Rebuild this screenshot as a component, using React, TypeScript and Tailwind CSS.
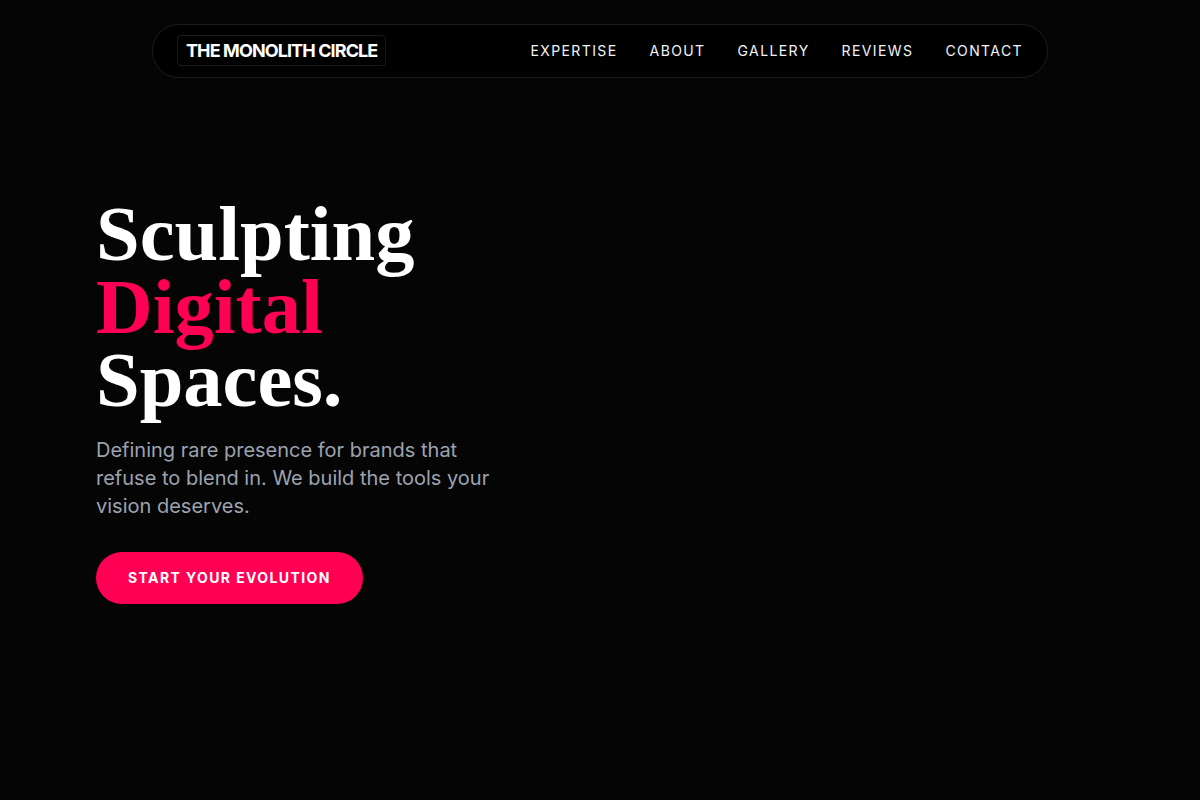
const navLinks = ['EXPERTISE', 'ABOUT', 'GALLERY', 'REVIEWS', 'CONTACT']

export default function App() {
  return (
    <div className="min-h-[800px] bg-[#050505] font-['Inter',sans-serif] text-white">
      <div className="flex justify-center pt-6">
        <nav className="flex h-[54px] w-[896px] items-center justify-between rounded-full border border-white/10 bg-black px-6">
          <div className="mb-px rounded border border-white/10 px-2 py-[3px] text-lg leading-[23px] font-bold tracking-[-0.9px]">THE MONOLITH CIRCLE</div>
          <div className="flex gap-8">
            {navLinks.map((link) => (
              <a key={link} className="text-sm leading-5 tracking-[1.4px] text-gray-100">{link}</a>
            ))}
          </div>
        </nav>
      </div>

      <main className="px-24 pt-[119px]">
        <h1 className="font-['Liberation_Serif',serif] text-[78.5px] leading-[73px] font-bold">
          Sculpting
          <br />
          <span className="text-[#ff0055]">Digital</span>
          <br />
          Spaces.
        </h1>
        <p className="mt-5 w-[420px] text-xl leading-7 text-[#9ca3af]">
          Defining rare presence for brands that refuse to blend in. We build the tools your vision deserves.
        </p>
        <button type="button" className="mt-8 h-[52px] rounded-full bg-[#ff0055] px-8 text-sm font-bold tracking-[1.4px] text-white">
          START YOUR EVOLUTION
        </button>
      </main>
    </div>
  )
}
